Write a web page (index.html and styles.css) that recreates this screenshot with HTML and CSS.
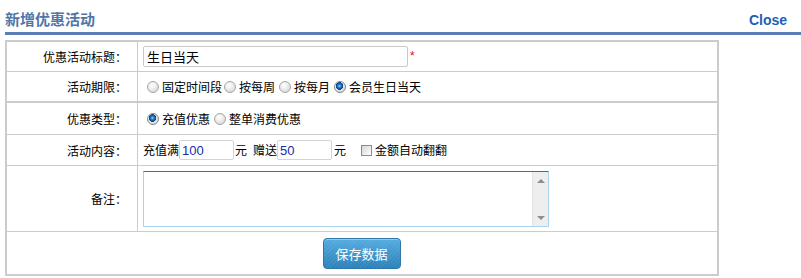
FILE: index.html
```html
<!DOCTYPE html>
<html lang="zh">
<head>
<meta charset="utf-8">
<title>新增优惠活动</title>
<link rel="stylesheet" href="styles.css">
</head>
<body>
<div class="header">
  <h1 class="title">新增优惠活动</h1>
  <a class="close" href="#">Close</a>
</div>
<table class="form">
  <tr class="r1">
    <td class="label">优惠活动标题：</td>
    <td class="field"><div class="line"><input class="txt title-input" type="text" value="生日当天"><span class="req">*</span></div></td>
  </tr>
  <tr class="r2">
    <td class="label">活动期限：</td>
    <td class="field"><div class="line">
      <input class="radio" type="radio" name="p"><span>固定时间段</span>
      <input class="radio r-tight" type="radio" name="p"><span>按每周</span>
      <input class="radio" type="radio" name="p"><span>按每月</span>
      <input class="radio" type="radio" name="p" checked><span>会员生日当天</span>
    </div></td>
  </tr>
  <tr class="r3">
    <td class="label">优惠类型：</td>
    <td class="field"><div class="line">
      <input class="radio" type="radio" name="t" checked><span>充值优惠</span>
      <input class="radio" type="radio" name="t"><span>整单消费优惠</span>
    </div></td>
  </tr>
  <tr class="r4">
    <td class="label">活动内容：</td>
    <td class="field"><div class="line">
      <span>充值满</span><input class="txt num" type="text" value="100"><span class="u1">元</span><span class="u2">赠送</span><input class="txt num" type="text" value="50"><span class="u3">元</span><input class="check" type="checkbox"><span class="u4">金额自动翻翻</span>
    </div></td>
  </tr>
  <tr class="r5">
    <td class="label">备注：</td>
    <td class="field"><div class="memo"><textarea class="memo-text"></textarea><div class="sbar"><span class="up"></span><span class="down"></span></div></div></td>
  </tr>
  <tr class="r6">
    <td class="actions" colspan="2"><button class="save" type="button">保存数据</button></td>
  </tr>
</table>
</body>
</html>
```

FILE: styles.css
```css
html, body {
  margin: 0;
  padding: 0;
  background: #fff;
}
body {
  font-family: "Noto Sans CJK SC", "Liberation Sans", sans-serif;
  font-size: 12px;
  color: #000;
}
.header {
  margin-left: 5px;
  height: 32px;
  box-sizing: content-box;
  border-bottom: 3px solid #5a7db5;
  display: flex;
  justify-content: space-between;
  align-items: flex-start;
  padding-right: 14px;
}
.title {
  margin: 0;
  padding-top: 9px;
  font-size: 15px;
  line-height: 20px;
  font-weight: bold;
  color: #5275a8;
}
.close {
  margin-top: 10px;
  font-family: "Liberation Sans", Arial, sans-serif;
  font-size: 14px;
  line-height: 20px;
  font-weight: bold;
  color: #2160b8;
  text-decoration: none;
}
.form {
  margin: 5px 0 0 5px;
  width: 714px;
  border-collapse: collapse;
  border: 2px solid #cccccc;
}
.form td {
  border: 1px solid #cccccc;
  padding: 0;
  vertical-align: middle;
}
.label {
  width: 120px;
  padding-right: 10px !important;
  text-align: right;
  white-space: nowrap;
}
.field {
  padding-left: 5px !important;
}
.r1 td { height: 29px; }
.r2 td { height: 29px; }
.r3 td { height: 31px; border-top-width: 2px; }
.r4 td { height: 30px; }
.r5 td { height: 65px; }
.r6 td { height: 42px; }
.line {
  display: flex;
  align-items: center;
  white-space: nowrap;
  line-height: 16px;
}
.txt {
  box-sizing: border-box;
  margin: 0;
  border: 1px solid #c9c9c9;
  border-radius: 2px;
  padding: 0 3px;
  font-size: 13px;
  font-family: "Noto Sans CJK SC", "Liberation Sans", sans-serif;
  color: #000;
  outline: none;
  background: #fff;
}
.title-input {
  width: 265px;
  height: 21px;
}
.req {
  color: #ff0000;
  font-family: "Liberation Sans", sans-serif;
  font-size: 12px;
  align-self: flex-start;
  margin-left: 2px;
  margin-top: 4px;
  line-height: 12px;
}
.num {
  width: 55px;
  height: 20px;
  font-family: "Liberation Sans", Arial, sans-serif;
  color: #1a2aa8;
  padding-left: 2px;
  border-color: #d4d4d4;
}
.u1 { margin-left: 1px; }
.u2 { margin-left: 6px; }
.u3 { margin-left: 2px; }
.u4 { margin-left: 3px; }
.radio {
  appearance: none;
  -webkit-appearance: none;
  width: 12px;
  height: 12px;
  margin: 0 3px 0 4px;
  border: 1px solid #a7a7a7;
  border-radius: 50%;
  box-sizing: border-box;
  background: radial-gradient(circle at 40% 35%, #ffffff 0, #f2f2f2 30%, #cfcfcf 100%);
  flex: none;
}
.r-tight {
  margin-left: 2px;
}
.radio:checked {
  border-color: #8a8a8a;
  background:
    radial-gradient(circle at 45% 40%, #9fd6ff 0, #2f80d0 1.5px, #0d4f98 3px, #083a72 3.6px, rgba(255,255,255,0) 4px),
    radial-gradient(circle at 40% 35%, #ffffff 0, #f2f2f2 30%, #cfcfcf 100%);
}
.check {
  appearance: none;
  -webkit-appearance: none;
  width: 11px;
  height: 11px;
  margin: 0 0 0 15px;
  border: 1px solid #8c8c8c;
  box-sizing: border-box;
  background: linear-gradient(135deg, #d6d6d6, #ffffff);
  flex: none;
}
.memo {
  display: flex;
  width: 406px;
  height: 56px;
  box-sizing: border-box;
  border: 1px solid #a9d3ef;
  border-top-color: #3f6f9f;
  margin-top: 0;
}
.memo-text {
  flex: 1;
  border: none;
  margin: 0;
  padding: 2px;
  resize: none;
  outline: none;
  font-family: "Noto Sans CJK SC", sans-serif;
  font-size: 12px;
}
.sbar {
  width: 16px;
  flex: none;
  background: #eeeeee;
  border-left: 1px solid #e2e2e2;
  display: flex;
  flex-direction: column;
  justify-content: space-between;
  align-items: center;
  padding: 7px 0 6px;
  box-sizing: border-box;
}
.up, .down {
  width: 0;
  height: 0;
  border-left: 4px solid transparent;
  border-right: 4px solid transparent;
}
.up { border-bottom: 4px solid #8e8e8e; }
.down { border-top: 4px solid #8e8e8e; }
.actions {
  text-align: center;
}
.save {
  width: 78px;
  height: 31px;
  margin: 0 0 0 -1px;
  padding: 0;
  border: 1px solid #2f78aa;
  border-radius: 4px;
  background:
    repeating-linear-gradient(135deg, rgba(255,255,255,0.06) 0 1px, rgba(255,255,255,0) 1px 3px),
    linear-gradient(#55ace0, #2c82b9);
  box-shadow: inset 0 1px 0 rgba(255,255,255,0.35);
  color: #ffffff;
  font-family: "Noto Sans CJK SC", sans-serif;
  font-size: 13px;
  cursor: pointer;
}
```
